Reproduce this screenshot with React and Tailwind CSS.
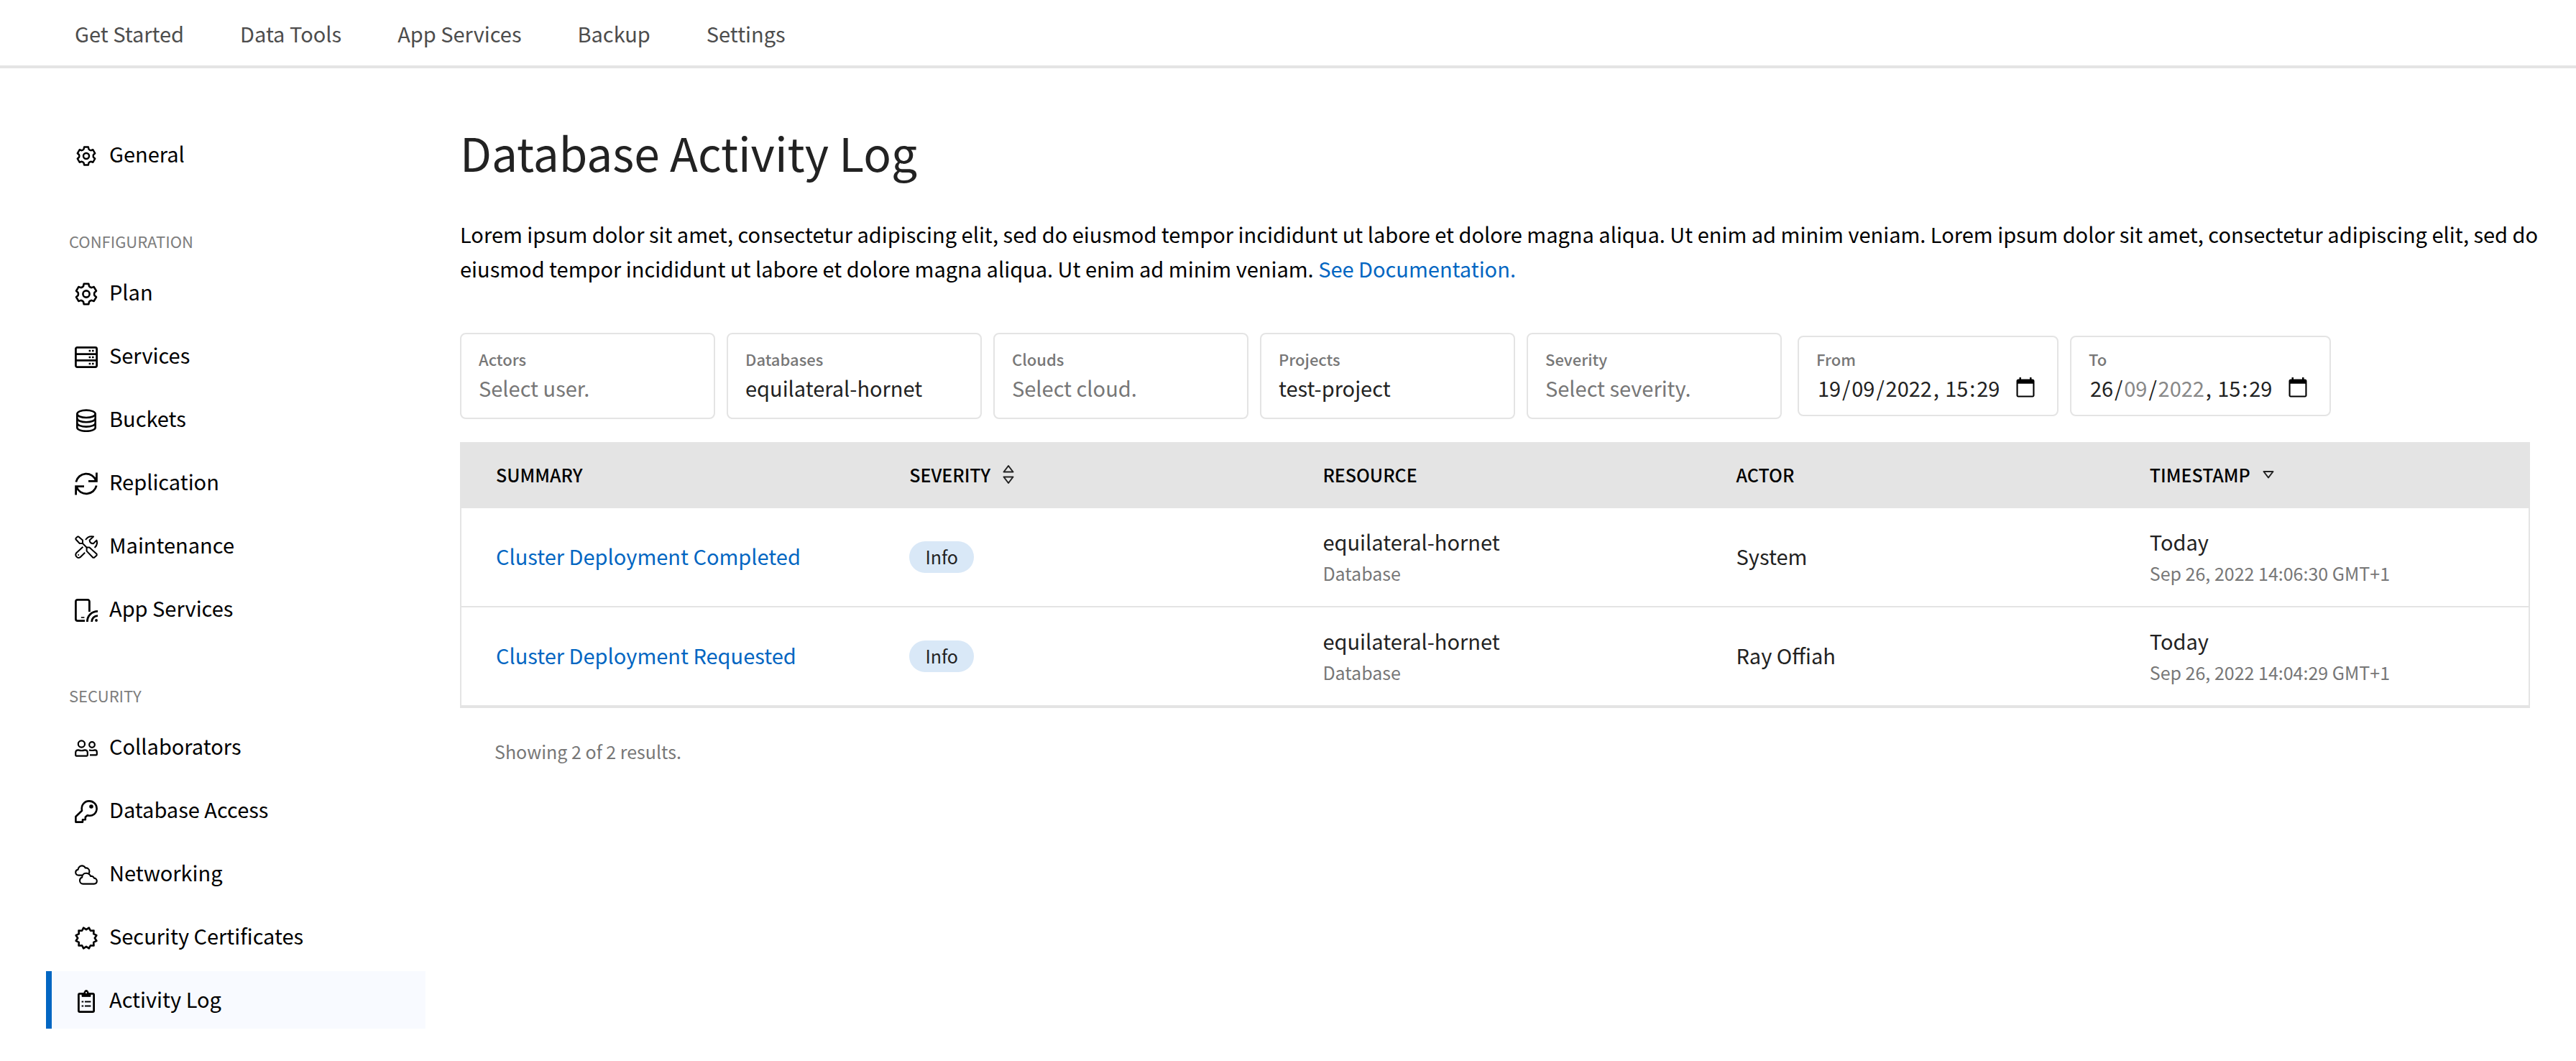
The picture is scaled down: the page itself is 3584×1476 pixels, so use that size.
import React from "react";

const round = (n) => Math.round(n * 100) / 100;

function polar(cx, cy, r, deg) {
  const a = ((deg - 90) * Math.PI) / 180;
  return `${round(cx + r * Math.cos(a))} ${round(cy + r * Math.sin(a))}`;
}

function gearPath() {
  let d = "";
  for (let i = 0; i < 6; i++) {
    const t = i * 60;
    d += `${i === 0 ? "M" : "L"}${polar(16, 16, 11.6, t - 20)}`;
    d += `L${polar(16, 16, 14.6, t - 13)}L${polar(16, 16, 14.6, t + 13)}`;
    d += `L${polar(16, 16, 11.6, t + 20)}`;
    d += `Q${polar(16, 16, 10.6, t + 30)} ${polar(16, 16, 11.6, t + 40)}`;
  }
  return d + "Z";
}

function sealPath() {
  let d = "";
  for (let i = 0; i < 12; i++) {
    const t = i * 30;
    d += `${i === 0 ? "M" : "L"}${polar(16, 16, 11.8, t)}L${polar(16, 16, 14.8, t + 15)}`;
  }
  return d + "Z";
}

const GEAR = gearPath();
const SEAL = sealPath();

function Icon({ children, className = "size-8", stroke = 2.6 }) {
  return (
    <svg
      viewBox="0 0 32 32"
      className={className}
      fill="none"
      stroke="currentColor"
      strokeWidth={stroke}
      strokeLinejoin="round"
      aria-hidden="true"
    >
      {children}
    </svg>
  );
}

const GearShape = () => (
  <>
    <path d={GEAR} />
    <circle cx="16" cy="16" r="4.6" />
  </>
);

const icons = {
  gearSmall: (
    <Icon className="size-7" stroke={2.8}>
      <GearShape />
    </Icon>
  ),
  gear: (
    <Icon>
      <GearShape />
    </Icon>
  ),
  services: (
    <Icon stroke={2.8}>
      <rect x="1.4" y="2.4" width="29.2" height="27.2" rx="2" />
      <path d="M1 11.6H31M1 20.4H31" />
      <path d="M19.6 7H22.2M24 7H26.6M19.6 16H22.2M24 16H26.6M19.6 25H22.2M24 25H26.6" strokeWidth="2.4" />
    </Icon>
  ),
  buckets: (
    <Icon>
      <ellipse cx="16" cy="6.8" rx="12.7" ry="5.2" />
      <path d="M3.3 6.8V25.8C3.3 28.7 9 30.8 16 30.8S28.7 28.7 28.7 25.8V6.8" />
      <path d="M3.3 13C3.3 15.9 9 18.2 16 18.2S28.7 15.9 28.7 13M3.3 19.4C3.3 22.3 9 24.6 16 24.6S28.7 22.3 28.7 19.4" />
    </Icon>
  ),
  replication: (
    <Icon stroke={2.8}>
      <path d="M1.8 13.5A14.5 14.5 0 0 1 29.5 11.5M30.2 18.5A14.5 14.5 0 0 1 2.5 20.5" />
      <path d="M30.4 .5V12.4H19M1.6 31.5V19.6H13" strokeLinejoin="miter" />
    </Icon>
  ),
  maintenance: (
    <Icon stroke={2}>
      <path d="M1.4 5.2V4L4 1.4H5.2L11 6.6V11H6.8Z" />
      <path d="M11 11L17 17" />
      <path d="M17 16.6H20.4L30.6 25.8V27.4L27 30.8H25.4L16.6 21.6V17Z" />
      <path d="M15 6C17.4 2.4 21.4 .6 26 1.6L20.6 6.4C20.8 9.6 22.4 11.2 25.8 11.2L30.4 6.6C31.8 10.6 30.8 14.2 27.6 17" />
      <path d="M11.4 15.8L2.4 24C-.6 27.6 3.6 32.6 7.6 30.2L14.2 23.8" />
      <circle cx="5.2" cy="27" r="1" fill="currentColor" stroke="none" />
    </Icon>
  ),
  appServices: (
    <Icon stroke={2.8}>
      <path d="M20.4 18V4C20.4 2.4 19.4 1.4 18 1.4H4C2.4 1.4 1.4 2.4 1.4 4V28C1.4 29.6 2.4 30.6 4 30.6H14" />
      <path d="M8.8 26H13.4" strokeWidth="1.6" />
      <path d="M17.4 32C17.4 23.6 23.6 17.4 32 17.4M23.6 32C23.6 27.2 27.2 23.6 32 23.6" />
      <circle cx="30" cy="30" r="1.9" fill="currentColor" stroke="none" />
    </Icon>
  ),
  collaborators: (
    <Icon stroke={2.2}>
      <circle cx="9.4" cy="10" r="4.6" />
      <circle cx="24" cy="11" r="3.8" />
      <path d="M1.2 25.6V22C1.2 19.8 2.8 18.4 5 18.4C7.6 19.4 11.4 19.4 14 18.4C16.2 18.4 17.8 19.8 17.8 22V25.6C17.8 26.2 17.4 26.6 16.8 26.6H2.2C1.6 26.6 1.2 26.2 1.2 25.6Z" />
      <path d="M20 18.400C22.600 19.200 25.400 19.200 28 18.400C29.8 18.4 30.8 19.6 30.8 21.4V24.4C30.8 25 30.4 25.4 29.8 25.4H21" />
    </Icon>
  ),
  key: (
    <Icon>
      <path d="M10 14.8L1.4 23V30.6H11V27.2H14.8V23.8L17.6 21.2C25 23.4 30.6 18 30.6 11.8C30.6 6 26 1.4 20 1.4C13.4 1.4 8.4 7.4 10 14.8Z" />
      <circle cx="23" cy="9" r="2" fill="currentColor" strokeWidth="1.6" />
    </Icon>
  ),
  networking: (
    <Icon stroke={2.1}>
      <path d="M10.4 16.6H5.4C2.8 16.6 1.2 14.8 1.2 12.6C1.2 10.6 2.6 9 4.6 8.6C4.8 6 7.2 3.4 10 3.4C12.4 3.4 13.8 4.6 14.8 6.4C17.8 6 20.4 8.2 20.4 11C20.400 12.600 20 14 19.400 15" />
      <path d="M11.4 28.6H26.8C29.2 28.6 30.8 27 30.8 24.6C30.8 22.2 29 20.6 26.8 20.6C26.4 18.8 24.4 17.4 22.2 18C21 15.4 18.6 13.8 15.8 13.8C12 13.8 10 16.8 10.2 19.6C8.4 20.2 7 21.8 7 24C7 26.6 9 28.6 11.4 28.6Z" />
    </Icon>
  ),
  seal: (
    <Icon stroke={2.6}>
      <path d={SEAL} />
    </Icon>
  ),
  clipboard: (
    <Icon stroke={2.8}>
      <rect x="5.4" y="5.4" width="21.2" height="25.2" rx="1.600" />
      <path d="M10 9.4V4.600H12.8C13 1.800 14.4 .4 16 .4S19 1.800 19.2 4.600H22V9.4Z" fill="currentColor" strokeWidth=".8" />
      <circle cx="16" cy="4" r="1.100" fill="white" stroke="none" />
      <path d="M9.6 16.4H12.2M14 16.4H22.4M9.6 22.4H12.2M14 22.4H22.4" strokeWidth="2" />
    </Icon>
  ),
};

const NAV = ["Get Started", "Data Tools", "App Services", "Backup", "Settings"];

const SECTIONS = [
  { items: [["General", "gearSmall"]] },
  {
    title: "Configuration",
    items: [
      ["Plan", "gear"],
      ["Services", "services"],
      ["Buckets", "buckets"],
      ["Replication", "replication"],
      ["Maintenance", "maintenance"],
      ["App Services", "appServices"],
    ],
  },
  {
    title: "Security",
    items: [
      ["Collaborators", "collaborators"],
      ["Database Access", "key"],
      ["Networking", "networking"],
      ["Security Certificates", "seal"],
      ["Activity Log", "clipboard"],
    ],
  },
];

const FILTERS = [
  { id: "actors", label: "Actors", placeholder: "Select user." },
  { id: "databases", label: "Databases", value: "equilateral-hornet" },
  { id: "clouds", label: "Clouds", placeholder: "Select cloud." },
  { id: "projects", label: "Projects", value: "test-project" },
  { id: "severity", label: "Severity", placeholder: "Select severity." },
];

const ROWS = [
  {
    summary: "Cluster Deployment Completed",
    severity: "Info",
    resource: "equilateral-hornet",
    kind: "Database",
    actor: "System",
    day: "Today",
    time: "Sep 26, 2022 14:06:30 GMT+1",
  },
  {
    summary: "Cluster Deployment Requested",
    severity: "Info",
    resource: "equilateral-hornet",
    kind: "Database",
    actor: "Ray Offiah",
    day: "Today",
    time: "Sep 26, 2022 14:04:29 GMT+1",
  },
];

function Sidebar() {
  return (
    <aside className="flex w-[528px] shrink-0 flex-col gap-16 pt-20">
      {SECTIONS.map((section, i) => (
        <section key={i}>
          {section.title && (
            <h2 className="mb-4 px-8 text-[22px] leading-8 text-[#7d7d7d] uppercase">{section.title}</h2>
          )}
          <ul className="flex flex-col gap-2">
            {section.items.map(([label, icon]) => {
              const active = label === "Activity Log";
              return (
                <li key={label}>
                  <a
                    href="#"
                    aria-current={active ? "page" : undefined}
                    className={
                      active
                        ? "flex h-20 items-center gap-4 border-l-8 border-[#0266c2] bg-[#f8faff] pl-8"
                        : "flex h-20 items-center gap-4 border-l-8 border-transparent pl-8"
                    }
                  >
                    <span className="flex w-8 items-center justify-center pt-1">{icons[icon]}</span>
                    <span className="pb-1">{label}</span>
                  </a>
                </li>
              );
            })}
          </ul>
        </section>
      ))}
    </aside>
  );
}

function Filter({ id, label, placeholder, value }) {
  return (
    <div className="flex h-[120px] w-[355px] flex-col justify-center rounded-lg border-2 border-[#e4e4e4] px-6 pb-1">
      <label htmlFor={id} className="text-[22px] leading-9 font-medium text-[#777777]">
        {label}
      </label>
      <input
        id={id}
        defaultValue={value}
        placeholder={placeholder}
        className="h-11 w-full text-[#222222] outline-none placeholder:text-[#777777]"
      />
    </div>
  );
}

function Segment({ id, name, value, wide, disabled }) {
  return (
    <input
      id={id}
      aria-label={id ? undefined : name}
      defaultValue={value}
      disabled={disabled}
      inputMode="numeric"
      className={
        wide
          ? "w-[68px] text-center outline-none disabled:text-[#888888]"
          : "w-[36px] text-center outline-none disabled:text-[#888888]"
      }
    />
  );
}

function DateField({ id, label, day, locked }) {
  return (
    <div className="flex h-28 w-[363px] flex-col justify-center rounded-lg border-2 border-[#e4e4e4] px-6 pb-1">
      <label htmlFor={id} className="text-[22px] leading-9 font-medium text-[#777777]">
        {label}
      </label>
      <div className="flex h-11 items-center justify-between text-[#222222]">
        <div className="flex items-center">
          <Segment id={id} name={`${label} day`} value={day} />
          <span>/</span>
          <Segment name={`${label} month`} value="09" disabled={locked} />
          <span>/</span>
          <Segment name={`${label} year`} value="2022" wide disabled={locked} />
          <span className="whitespace-pre">, </span>
          <Segment name={`${label} hour`} value="15" />
          <span>:</span>
          <Segment name={`${label} minute`} value="29" />
        </div>
        <button
          type="button"
          aria-label={`Open ${label} calendar`}
          className="mr-1 flex size-8 items-center justify-center text-black"
        >
          <svg viewBox="0 0 28 30" className="h-[30px] w-7" aria-hidden="true">
            <path
              fill="currentColor"
              fillRule="evenodd"
              d="M5.5 1H8V3.500H20V1H22.5V3.500H24C25.4 3.500 26.500 4.600 26.500 6V26C26.500 27.400 25.4 28.500 24 28.500H4C2.6 28.500 1.500 27.400 1.500 26V6C1.500 4.600 2.6 3.500 4 3.500H5.5ZM3.6 9.800V26.400H24.4V9.800Z"
            />
          </svg>
        </button>
      </div>
    </div>
  );
}

function SortIcon({ both }) {
  return both ? (
    <svg
      viewBox="0 0 18 28"
      className="h-7 w-[18px]"
      fill="none"
      stroke="#222222"
      strokeWidth="2"
      strokeLinejoin="round"
      aria-hidden="true"
    >
      <path d="M9 2L15.5 10.5H2.5Z" />
      <path d="M9 26L15.5 17.5H2.5Z" />
    </svg>
  ) : (
    <svg
      viewBox="0 0 18 14"
      className="h-3.5 w-[18px]"
      fill="none"
      stroke="#222222"
      strokeWidth="2"
      strokeLinejoin="round"
      aria-hidden="true"
    >
      <path d="M9 11.5L15.5 3H2.5Z" />
    </svg>
  );
}

function ActivityTable() {
  return (
    <table className="w-full table-fixed border-separate border-spacing-0 border-x-2 border-b-2 border-[#e4e4e4] text-left text-[#222222]">
      <thead className="bg-[#e4e4e4] text-[25px] leading-9 text-black uppercase">
        <tr>
          {["Summary", "Severity", "Resource", "Actor", "Timestamp"].map((name) => (
            <th key={name} scope="col" className="h-[92px] pt-0 pb-0.5 pl-12 font-medium">
              {name === "Severity" || name === "Timestamp" ? (
                <button type="button" className="flex items-center gap-4 uppercase">
                  {name}
                  <SortIcon both={name === "Severity"} />
                </button>
              ) : (
                name
              )}
            </th>
          ))}
        </tr>
      </thead>
      <tbody>
        {ROWS.map((row) => (
          <tr key={row.summary} className="*:h-[138px] *:border-b-2 *:border-[#e4e4e4] *:pl-12">
            <td className="pb-1">
              <a href="#" className="text-[#0266c2]">
                {row.summary}
              </a>
            </td>
            <td>
              <span className="flex h-11 w-[90px] items-center justify-center rounded-full bg-[#d9e8f7] pb-0.5 text-[25px]">
                {row.severity}
              </span>
            </td>
            <td>
              <div className="leading-11">{row.resource}</div>
              <div className="text-[25px] leading-11 text-[#777777]">{row.kind}</div>
            </td>
            <td className="pb-1">{row.actor}</td>
            <td>
              <div className="leading-11">{row.day}</div>
              <div className="text-[25px] leading-11 text-[#777777]">{row.time}</div>
            </td>
          </tr>
        ))}
      </tbody>
    </table>
  );
}

export default function App() {
  return (
    <div className="min-h-screen bg-white font-['Noto_Sans_CJK_SC','Noto_Sans',sans-serif] text-[29px] leading-12 text-black">
      <nav className="flex h-[95px] items-center gap-[78px] border-b-4 border-[#e4e4e4] px-[104px] text-[#4d4d4d]">
        {NAV.map((name) => (
          <a key={name} href="#">
            {name}
          </a>
        ))}
      </nav>
      <div className="flex gap-12 px-16">
        <Sidebar />
        <main className="min-w-0 flex-1 pt-[72px]">
          <h1 className="text-[64px] leading-[88px] text-[#222222]">Database Activity Log</h1>
          <p className="-mr-5 mt-[46px]">
            Lorem ipsum dolor sit amet, consectetur adipiscing elit, sed do eiusmod tempor incididunt ut labore et dolore
            magna aliqua. Ut enim ad minim veniam. Lorem ipsum dolor sit amet, consectetur adipiscing elit, sed do eiusmod
            tempor incididunt ut labore et dolore magna aliqua. Ut enim ad minim veniam.{" "}
            <a href="#" className="text-[#0266c2]">
              See Documentation.
            </a>
          </p>
          <div className="mt-[66px] mb-8 flex flex-wrap items-center gap-4">
            {FILTERS.map((filter) => (
              <Filter key={filter.id} {...filter} />
            ))}
            <div className="ml-1.5 flex gap-4">
              <DateField id="from" label="From" day="19" />
              <DateField id="to" label="To" day="26" locked />
            </div>
          </div>
          <ActivityTable />
          <p className="mt-9 px-12 text-[25px] text-[#777777]">Showing 2 of 2 results.</p>
        </main>
      </div>
    </div>
  );
}
